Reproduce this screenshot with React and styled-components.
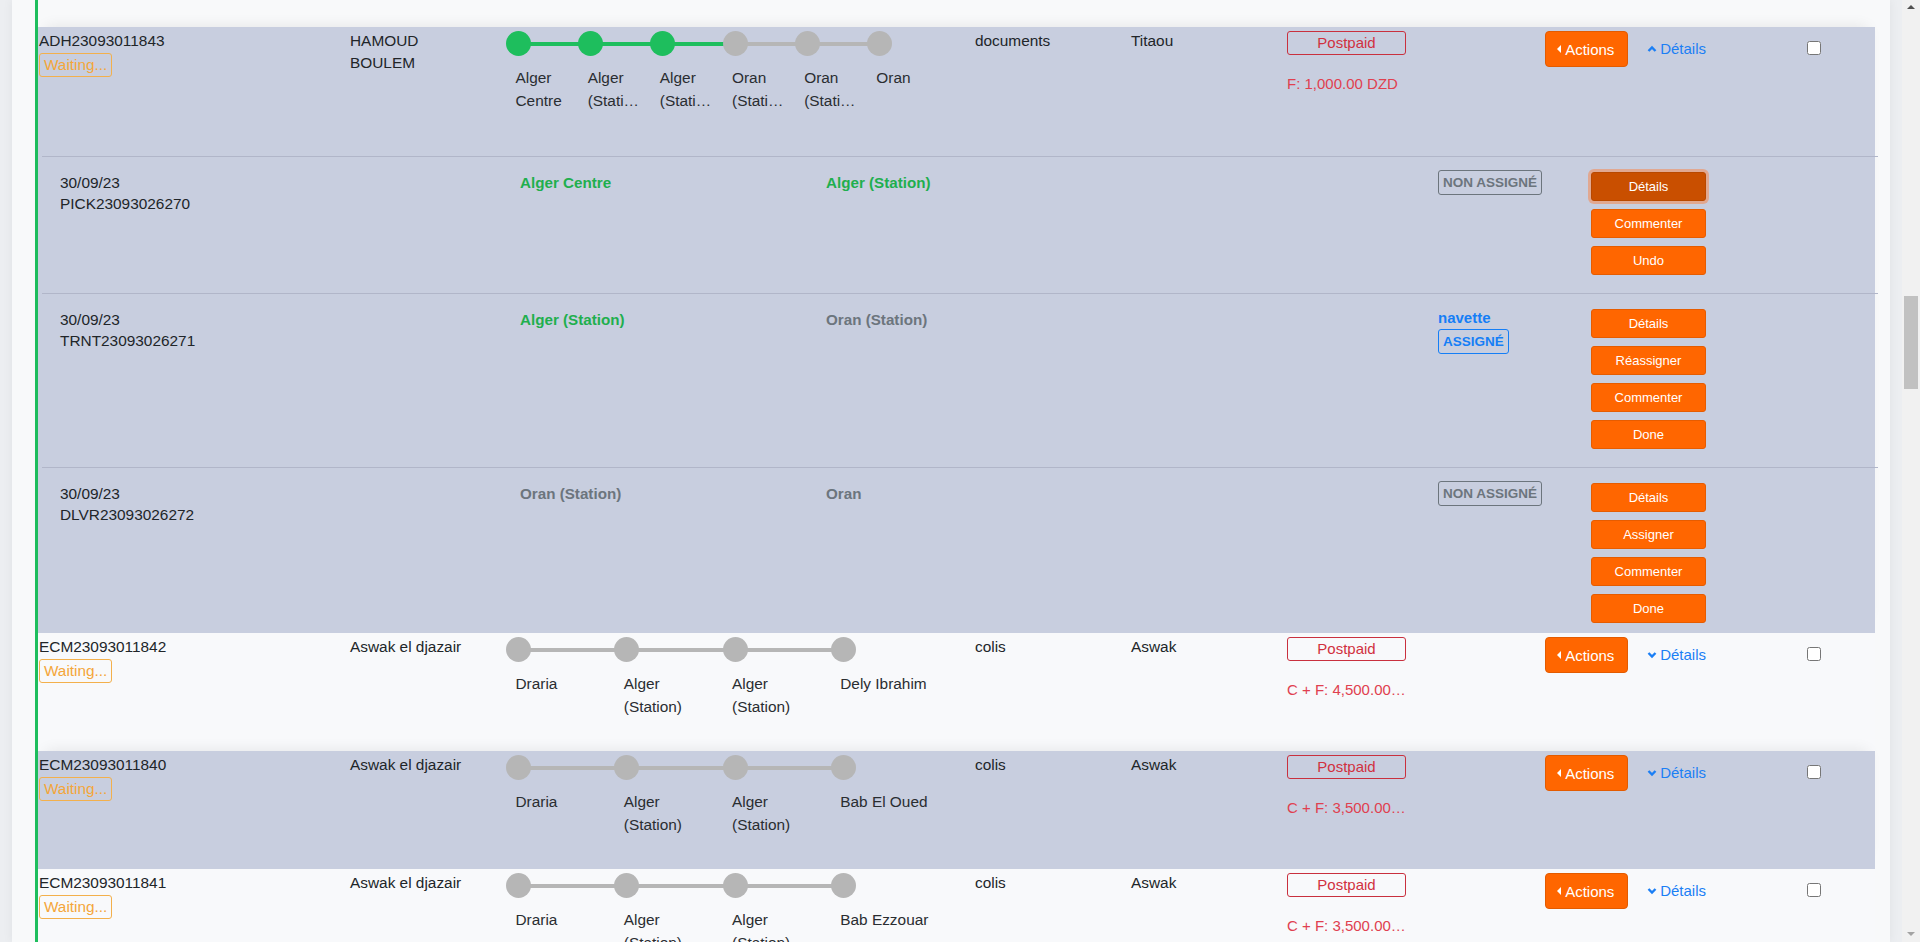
import React from 'react';
import styled, { createGlobalStyle, css } from 'styled-components';

const GlobalStyle = createGlobalStyle`
  html, body {
    margin: 0;
    padding: 0;
    height: 100%;
    overflow: hidden;
  }
  body {
    font-family: "Liberation Sans", Arial, sans-serif;
    color: #212529;
    background: #eceef1;
  }
  #root {
    height: 100%;
  }
`;

const Screen = styled.div`
  display: flex;
  height: 942px;
`;

const Main = styled.main`
  flex: 1;
  display: flex;
  min-width: 0;
  padding: 0 12px;
`;

const Card = styled.section`
  flex: 1;
  min-width: 0;
  background: #f8f9fa;
  padding: 0 12px 0 23px;
  box-shadow: 0 0 10px rgba(0, 0, 0, 0.06);
  overflow: hidden;
`;

const List = styled.div`
  height: 100%;
  padding-top: 27px;
  border-left: 3px solid #1ebe5d;
  box-sizing: border-box;
`;

const Shipment = styled.div`
  margin-right: 3px;
  background: ${p => (p.$shaded ? '#c8cedf' : '#f8f9fb')};
  ${p => p.$shaded && css`
    box-shadow: 0 -8px 14px -8px rgba(0, 0, 0, 0.09);
  `}
`;

const MainRow = styled.div`
  display: grid;
  grid-template-columns: 311px 156px 469px 156px 156px 156px 263px 1fr;
  align-items: start;
  height: ${p => (p.$tall ? 129 : 118)}px;
  padding-left: 1px;
  box-sizing: border-box;
  font-size: 15.4px;
  line-height: 22px;
`;

const IdCell = styled.div`
  display: flex;
  flex-direction: column;
  align-items: flex-start;
  padding-top: 3px;
`;

const StatusBadge = styled.span`
  margin-top: 1px;
  padding: 0 4px;
  border: 1px solid #f3b04c;
  border-radius: 3px;
  color: #f4a63a;
  font-size: 15.3px;
  line-height: 22px;
`;

const TextCell = styled.div`
  padding-top: 3px;
  max-width: ${p => p.$max || 150}px;
`;

const Track = styled.div`
  display: flex;
  width: 433px;
  padding-top: 4px;
`;

const Step = styled.div`
  flex: 1;
  min-width: 0;
`;

const StepHead = styled.div`
  display: flex;
  align-items: center;
  height: 25px;
`;

const Dot = styled.span`
  flex: none;
  width: 25px;
  height: 25px;
  border-radius: 50%;
  background: ${p => (p.$done ? '#1ebe5d' : '#b6b6b6')};
`;

const Connector = styled.span`
  flex: 1;
  height: 4px;
  margin: 0 -1px;
  background: ${p => (p.$done ? '#1ebe5d' : '#b6b6b6')};
`;

const StepLabel = styled.div`
  margin-top: 11px;
  padding: 0 9px 0 9.5px;
  overflow: hidden;
  text-overflow: ellipsis;
  line-height: 22.5px;
  color: #2a2d31;
`;

const PayCell = styled.div`
  width: 119px;
  padding-top: 4px;
`;

const PayBadge = styled.div`
  border: 1px solid #c9303e;
  border-radius: 3px;
  color: #d1313f;
  text-align: center;
  font-size: 15px;
  line-height: 22px;
`;

const Price = styled.div`
  margin-top: 18px;
  color: #e0404f;
  font-size: 15px;
  line-height: 22px;
  white-space: nowrap;
  overflow: hidden;
  text-overflow: ellipsis;
`;

const ActionsCell = styled.div`
  display: flex;
  justify-content: flex-end;
  align-items: center;
  gap: 19px;
  padding-top: 4px;
`;

const ActionsButton = styled.button`
  display: flex;
  align-items: center;
  gap: 4px;
  width: 83px;
  height: 36px;
  padding: 0 0 0 11px;
  background: #ff6600;
  border: 1px solid #e35b00;
  border-radius: 4px;
  color: #fff;
  font-family: inherit;
  font-size: 15px;

  &::before {
    content: '';
    border-top: 4px solid transparent;
    border-bottom: 4px solid transparent;
    border-right: 4px solid currentColor;
  }
`;

const DetailsToggle = styled.a`
  display: flex;
  align-items: center;
  gap: 3px;
  color: #1b7ff5;
  font-size: 15px;
  cursor: pointer;
`;

const CheckCell = styled.div`
  padding: 12px 0 0 101px;

  input {
    width: 14px;
    height: 14px;
    margin: 0;
  }
`;

const Leg = styled.div`
  display: grid;
  grid-template-columns: 460px 306px 612px 153px 115px 1fr;
  align-items: start;
  margin: 0 -3px 0 4px;
  padding: 15px 0 18px 18px;
  border-top: 1px solid #b1b6c9;
  font-size: 15.4px;
  line-height: 21px;

  &:last-child {
    padding-bottom: 10px;
  }
`;

const Station = styled.div`
  font-weight: 700;
  font-size: 15.2px;
  color: ${p => (p.$done ? '#1faf4e' : '#6c757d')};
`;

const AssignCell = styled.div`
  display: flex;
  flex-direction: column;
  align-items: flex-start;
  margin-top: -2px;
`;

const Carrier = styled.span`
  color: #157ef6;
  font-weight: 700;
  font-size: 15px;
  line-height: 22px;
`;

const AssignBadge = styled.span`
  padding: 3px 4px;
  border: 1px solid ${p => (p.$assigned ? '#157ef6' : '#6c757d')};
  border-radius: 3px;
  color: ${p => (p.$assigned ? '#157ef6' : '#6c757d')};
  font-weight: 700;
  font-size: 13.5px;
  line-height: 17px;
`;

const LegActions = styled.div`
  display: flex;
  flex-direction: column;
  gap: 8px;
`;

const LegButton = styled.button`
  height: 29px;
  padding: 0;
  background: ${p => (p.$focused ? '#c94f00' : '#ff6600')};
  border: 1px solid ${p => (p.$focused ? '#b84800' : '#e65c00')};
  border-radius: 3px;
  color: #fff;
  font-family: inherit;
  font-size: 13px;
  ${p => p.$focused && css`
    box-shadow: 0 0 0 3px rgba(255, 122, 51, 0.45);
  `}
`;

const ScrollTrack = styled.div`
  flex: none;
  width: 18px;
  display: flex;
  flex-direction: column;
  align-items: center;
  background: #f1f1f1;
`;

const ScrollArrow = styled.span`
  border-left: 4px solid transparent;
  border-right: 4px solid transparent;
  ${p => (p.$down
    ? css`border-top: 4px solid #a3a3a3; margin: auto 0 6px;`
    : css`border-bottom: 4px solid #505050; margin-top: 5px;`)}
`;

const ScrollThumb = styled.div`
  width: 14px;
  height: 93px;
  margin-top: 287px;
  background: #c1c1c1;
`;

const Chevron = ({ up }) => (
  <svg width="10" height="8" viewBox="0 0 10 8">
    <path
      d={up ? 'M1.5 6 L5 2.5 L8.5 6' : 'M1.5 2 L5 5.5 L8.5 2'}
      stroke="currentColor"
      strokeWidth="2.4"
      fill="none"
    />
  </svg>
);

const s = (label, done = false) => ({ label, done });

const shipments = [
  {
    id: 'ADH23093011843',
    client: 'HAMOUD BOULEM',
    steps: [
      s('Alger Centre', true), s('Alger (Station)', true), s('Alger (Station)', true),
      s('Oran (Station)'), s('Oran (Station)'), s('Oran'),
    ],
    type: 'documents',
    sender: 'Titaou',
    price: 'F: 1,000.00 DZD',
    shaded: true,
    legs: [
      {
        date: '30/09/23', code: 'PICK23093026270',
        from: s('Alger Centre', true), to: s('Alger (Station)', true),
        carrier: null, actions: ['Détails', 'Commenter', 'Undo'], focused: 0,
      },
      {
        date: '30/09/23', code: 'TRNT23093026271',
        from: s('Alger (Station)', true), to: s('Oran (Station)'),
        carrier: 'navette', actions: ['Détails', 'Réassigner', 'Commenter', 'Done'],
      },
      {
        date: '30/09/23', code: 'DLVR23093026272',
        from: s('Oran (Station)'), to: s('Oran'),
        carrier: null, actions: ['Détails', 'Assigner', 'Commenter', 'Done'],
      },
    ],
  },
  {
    id: 'ECM23093011842',
    client: 'Aswak el djazair',
    steps: [s('Draria'), s('Alger (Station)'), s('Alger (Station)'), s('Dely Ibrahim')],
    type: 'colis',
    sender: 'Aswak',
    price: 'C + F: 4,500.00 DZD',
  },
  {
    id: 'ECM23093011840',
    client: 'Aswak el djazair',
    steps: [s('Draria'), s('Alger (Station)'), s('Alger (Station)'), s('Bab El Oued')],
    type: 'colis',
    sender: 'Aswak',
    price: 'C + F: 3,500.00 DZD',
    shaded: true,
  },
  {
    id: 'ECM23093011841',
    client: 'Aswak el djazair',
    steps: [s('Draria'), s('Alger (Station)'), s('Alger (Station)'), s('Bab Ezzouar')],
    type: 'colis',
    sender: 'Aswak',
    price: 'C + F: 3,500.00 DZD',
  },
];

const Progress = ({ steps }) => (
  <Track>
    {steps.map((step, i) => (
      <Step key={i}>
        <StepHead>
          <Dot $done={step.done} />
          {i < steps.length - 1 && <Connector $done={step.done} />}
        </StepHead>
        <StepLabel>{step.label}</StepLabel>
      </Step>
    ))}
  </Track>
);

const LegRow = ({ leg }) => (
  <Leg>
    <div>
      <div>{leg.date}</div>
      <div>{leg.code}</div>
    </div>
    <Station $done={leg.from.done}>{leg.from.label}</Station>
    <Station $done={leg.to.done}>{leg.to.label}</Station>
    <AssignCell>
      {leg.carrier && <Carrier>{leg.carrier}</Carrier>}
      <AssignBadge $assigned={!!leg.carrier}>
        {leg.carrier ? 'ASSIGNÉ' : 'NON ASSIGNÉ'}
      </AssignBadge>
    </AssignCell>
    <LegActions>
      {leg.actions.map((label, i) => (
        <LegButton key={label} $focused={leg.focused === i}>{label}</LegButton>
      ))}
    </LegActions>
  </Leg>
);

const ShipmentRow = ({ item }) => {
  const open = !!item.legs;
  return (
    <Shipment $shaded={item.shaded}>
      <MainRow $tall={open}>
        <IdCell>
          <div>{item.id}</div>
          <StatusBadge>Waiting...</StatusBadge>
        </IdCell>
        <TextCell $max={125}>{item.client}</TextCell>
        <Progress steps={item.steps} />
        <TextCell>{item.type}</TextCell>
        <TextCell>{item.sender}</TextCell>
        <PayCell>
          <PayBadge>Postpaid</PayBadge>
          <Price>{item.price}</Price>
        </PayCell>
        <ActionsCell>
          <ActionsButton>Actions</ActionsButton>
          <DetailsToggle>
            <Chevron up={open} />
            Détails
          </DetailsToggle>
        </ActionsCell>
        <CheckCell>
          <input type="checkbox" />
        </CheckCell>
      </MainRow>
      {open && item.legs.map(leg => <LegRow key={leg.code} leg={leg} />)}
    </Shipment>
  );
};

const App = () => (
  <>
    <GlobalStyle />
    <Screen>
      <Main>
        <Card>
          <List>
            {shipments.map(item => (
              <ShipmentRow key={item.id} item={item} />
            ))}
          </List>
        </Card>
      </Main>
      <ScrollTrack>
        <ScrollArrow />
        <ScrollThumb />
        <ScrollArrow $down />
      </ScrollTrack>
    </Screen>
  </>
);

export default App;
